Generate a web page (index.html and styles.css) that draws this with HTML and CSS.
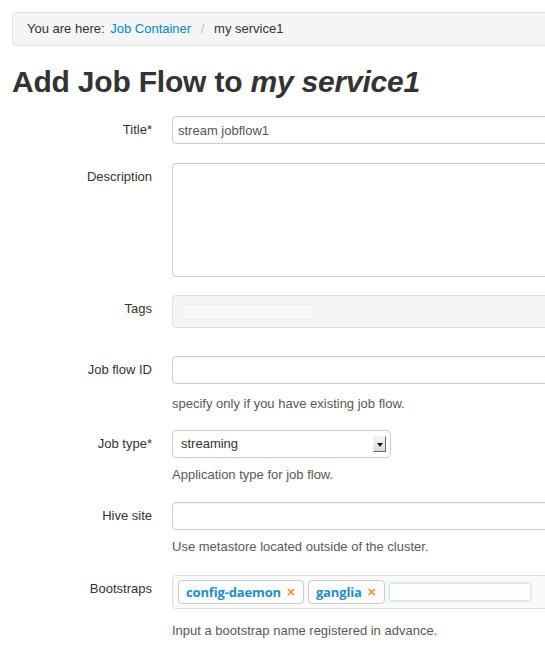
FILE: index.html
```html
<!DOCTYPE html>
<html lang="en">
<head>
    <meta charset="UTF-8">
    <meta name="viewport" content="width=device-width, initial-scale=1.0">
    <title>Add Job Flow</title>
    <link rel="stylesheet" href="styles.css">
</head>
<body>
<div class="page">

    <!-- Breadcrumb -->
    <div class="breadcrumb">
        <span class="here">You are here:</span>
        <a href="#">Job Container</a>
        <span class="divider">/</span>
        <span>my service1</span>
    </div>

    <h1>Add Job Flow to <em>my service1</em></h1>

    <form class="job-form">
        <div class="form-row row-title">
            <label for="title">Title*</label>
            <div class="controls">
                <input type="text" id="title" class="text-input" value="stream jobflow1">
            </div>
        </div>

        <div class="form-row row-desc">
            <label for="description">Description</label>
            <div class="controls">
                <textarea id="description" class="text-area"></textarea>
            </div>
        </div>

        <div class="form-row row-tags">
            <label>Tags</label>
            <div class="controls">
                <div class="tag-box disabled">
                    <span class="tag-slot"></span>
                </div>
            </div>
        </div>

        <div class="form-row row-flowid">
            <label for="flowid">Job flow ID</label>
            <div class="controls">
                <input type="text" id="flowid" class="text-input">
                <p class="help">specify only if you have existing job flow.</p>
            </div>
        </div>

        <div class="form-row row-type">
            <label>Job type*</label>
            <div class="controls">
                <div class="select-box">
                    <span class="select-value">streaming</span>
                    <span class="select-arrow"></span>
                </div>
                <p class="help">Application type for job flow.</p>
            </div>
        </div>

        <div class="form-row row-hive">
            <label for="hive">Hive site</label>
            <div class="controls">
                <input type="text" id="hive" class="text-input">
                <p class="help">Use metastore located outside of the cluster.</p>
            </div>
        </div>

        <div class="form-row row-boot">
            <label>Bootstraps</label>
            <div class="controls">
                <div class="tag-box">
                    <span class="tag">config-daemon <span class="remove">&times;</span></span>
                    <span class="tag">ganglia <span class="remove">&times;</span></span>
                    <span class="tag-input"></span>
                </div>
                <p class="help">Input a bootstrap name registered in advance.</p>
            </div>
        </div>
    </form>

</div>
</body>
</html>
```

FILE: styles.css
```css
/* page */
html, body {
    overflow: hidden;
}

body {
    margin: 0;
    padding: 0;
    background-color: #fff;
    font-family: "Liberation Sans", Arial, sans-serif;
    font-size: 13px;
    line-height: 18px;
    color: #333;
}

.page {
    width: 600px;
    padding-left: 12px;
}

/* breadcrumb */
.breadcrumb {
    margin-top: 12px;
    padding: 7px 14px;
    line-height: 18px;
    background-color: #f5f5f5;
    border: 1px solid #e3e3e3;
    border-radius: 4px;
}

.breadcrumb .here {
    margin-right: 2px;
}

.breadcrumb a {
    color: #0088cc;
    text-decoration: none;
}

.breadcrumb .divider {
    color: #bbb;
    padding: 0 6px;
}

h1 {
    margin: 18px 0 16px;
    font-size: 30px;
    line-height: 36px;
    font-weight: bold;
    letter-spacing: -0.2px;
    color: #333;
}

/* form rows */
.form-row {
    display: flex;
}

.form-row label {
    width: 140px;
    flex: none;
    padding-right: 20px;
    padding-top: 5px;
    text-align: right;
}

.controls {
    flex: 1;
}

.row-title { margin-bottom: 19px; }
.row-desc { margin-bottom: 18px; }
.row-tags { margin-bottom: 28px; }
.row-flowid { margin-bottom: 17px; }
.row-type { margin-bottom: 18px; }
.row-hive { margin-bottom: 19px; }

.text-input,
.text-area {
    display: block;
    box-sizing: border-box;
    width: 100%;
    height: 28px;
    margin: 0;
    padding: 4px 5px;
    font-family: inherit;
    font-size: 13px;
    color: #555;
    background-color: #fff;
    border: 1px solid #ccc;
    border-radius: 4px;
    box-shadow: inset 0 1px 1px rgba(0, 0, 0, 0.05);
}

.text-area {
    height: 114px;
    resize: none;
}

.help {
    margin: 11px 0 0;
    color: #595959;
}

.row-type .help,
.row-hive .help {
    margin-top: 8px;
}

.row-boot .help {
    margin-top: 13px;
}

/* select */
.select-box {
    box-sizing: border-box;
    width: 219px;
    height: 28px;
    display: flex;
    align-items: center;
    padding: 0 4px 0 8px;
    background-color: #fff;
    border: 1px solid #ccc;
    border-radius: 4px;
}

.select-value {
    flex: 1;
}

.select-arrow {
    position: relative;
    width: 13px;
    height: 16px;
    box-sizing: border-box;
    background: linear-gradient(#f4f4f4, #dcdcdc);
    border: 1px solid #eee;
    border-right-color: #666;
    border-bottom-color: #666;
}

.select-arrow::after {
    content: "";
    position: absolute;
    left: 3px;
    top: 6px;
    border-left: 3px solid transparent;
    border-right: 3px solid transparent;
    border-top: 4px solid #111;
}

/* tag boxes */
.tag-box {
    box-sizing: border-box;
    display: flex;
    align-items: center;
    gap: 4px;
    min-height: 33px;
    padding: 4px 5px;
    background-color: #fafafa;
    border: 1px solid #ddd;
    border-radius: 4px;
}

.tag-box.disabled {
    background-color: #f5f5f5;
    padding-top: 8px;
    padding-bottom: 7px;
    align-items: flex-start;
}

.tag-slot {
    width: 141px;
    height: 16px;
    box-sizing: border-box;
    border: 1px solid #ededed;
    border-radius: 3px;
    background-color: #f6f6f6;
}

.tag {
    display: inline-flex;
    align-items: center;
    height: 24px;
    box-sizing: border-box;
    padding: 0 7px;
    font-family: "Open Sans", "Liberation Sans", sans-serif;
    font-size: 13px;
    font-weight: bold;
    letter-spacing: -0.15px;
    color: #1f8ecb;
    background-color: #fdfdfd;
    border: 1px solid #ccc;
    border-radius: 4px;
}

.tag .remove {
    margin-left: 5px;
    font-family: "DejaVu Sans", sans-serif;
    font-size: 12px;
    color: #e8921c;
}

.tag-input {
    width: 142px;
    height: 18px;
    box-sizing: border-box;
    background-color: #fff;
    border: 1px solid #d5e6f5;
    border-radius: 3px;
    box-shadow: 0 0 3px rgba(82, 168, 236, 0.35);
}
```
